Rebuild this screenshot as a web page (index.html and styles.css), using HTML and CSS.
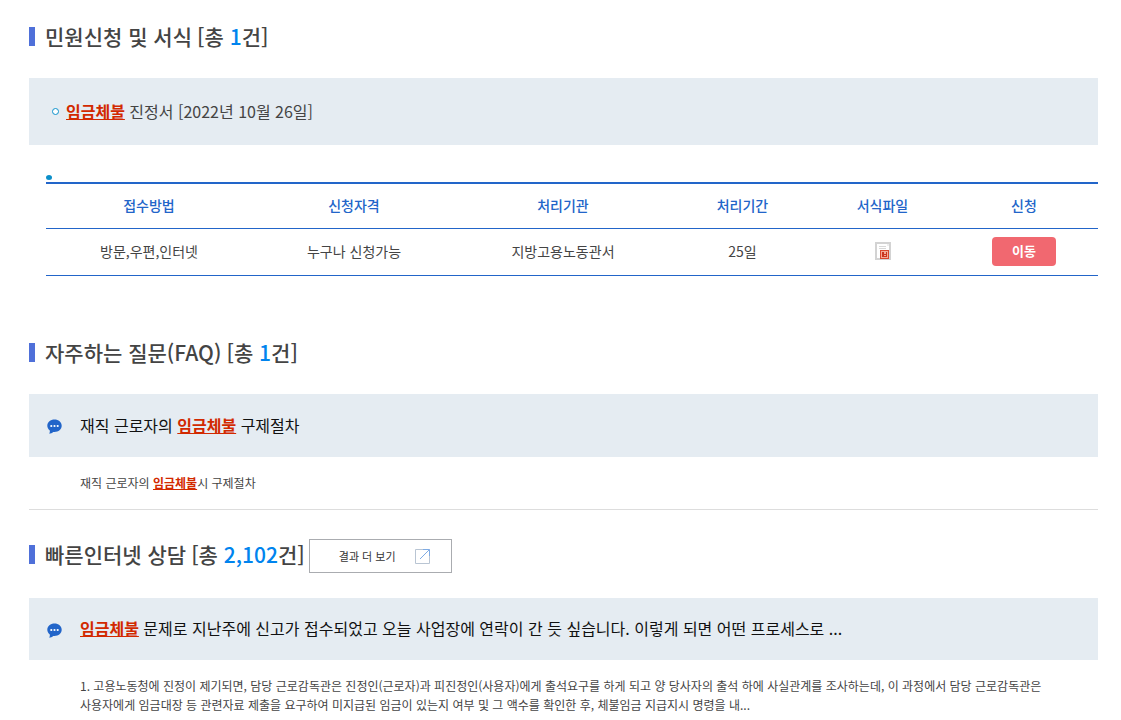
FILE: index.html
```html
<!DOCTYPE html>
<html lang="ko">
<head>
<meta charset="utf-8">
<meta name="viewport" content="width=device-width, initial-scale=1">
<title>통합검색</title>
<link rel="stylesheet" href="styles.css">
</head>
<body>
<main class="results">
  <section class="group forms">
    <header class="group-head">
      <h2 class="title">민원신청 및 서식 <span class="count">[총 <em>1</em>건]</span></h2>
    </header>
    <div class="bar bar-form">
      <span class="ring"></span>
      <a class="form-link" href="#"><mark>임금체불</mark> 진정서 [2022년 10월 26일]</a>
    </div>
    <div class="detail">
      <span class="dot"></span>
      <table class="info">
        <colgroup>
          <col class="c-method"><col class="c-who"><col class="c-office"><col class="c-period"><col class="c-file"><col class="c-apply">
        </colgroup>
        <thead>
          <tr><th scope="col">접수방법</th><th scope="col">신청자격</th><th scope="col">처리기관</th><th scope="col">처리기간</th><th scope="col">서식파일</th><th scope="col">신청</th></tr>
        </thead>
        <tbody>
          <tr>
            <td>방문,우편,인터넷</td>
            <td>누구나 신청가능</td>
            <td>지방고용노동관서</td>
            <td>25일</td>
            <td>
              <a class="file" href="#" aria-label="서식파일">
                <svg width="16" height="18" viewBox="0 0 16 18" shape-rendering="crispEdges">
                  <path fill="#d3d3d3" d="M0 0h16v18H0z"/>
                  <path fill="#fff" d="M2 2h12v14H2z"/>
                  <path fill="#d8d8d8" d="M4 4h7v1H4zM4 6h7v1H4z"/>
                  <path fill="#eee" d="M12 2h2v2h-2z"/>
                  <path fill="#d9472b" d="M5 8h9v9H5z"/>
                  <path fill="#f3ab97" d="M6 9h7v7H6z"/>
                  <path fill="#c9361f" d="M7 10h2v4H7zM11 10h1v4h-1zM9 12h2v1H9zM7 14h5v1H7z"/>
                </svg>
              </a>
            </td>
            <td><button class="go" type="button">이동</button></td>
          </tr>
        </tbody>
      </table>
    </div>
  </section>

  <section class="group faq">
    <header class="group-head">
      <h2 class="title">자주하는 질문(FAQ) <span class="count">[총 <em>1</em>건]</span></h2>
    </header>
    <div class="bar">
      <svg class="talk" width="15" height="15" viewBox="0 0 15 15"><path fill="#2265c9" d="M7.500.5C11.500.5 14.700 3.200 14.700 6.800S11.500 13 7.500 13L6.200 12.900C5.200 14 3.700 14.500 2 14.500C2.800 13.700 3 12.800 2.800 11.500C1.200 10.300.3 8.700.3 6.800C.3 3.200 3.500.5 7.500.5Z"/><g fill="#fff"><circle cx="4.300" cy="7" r="1.100"/><circle cx="7.500" cy="7" r="1.100"/><circle cx="10.700" cy="7" r="1.100"/></g></svg>
      <a class="question" href="#">재직 근로자의 <mark>임금체불</mark> 구제절차</a>
    </div>
    <p class="answer">재직 근로자의 <mark>임금체불</mark>시 구제절차</p>
  </section>

  <section class="group counsel">
    <header class="group-head">
      <h2 class="title">빠른인터넷 상담 <span class="count">[총 <em>2,102</em>건]</span></h2>
      <a class="more" href="#">결과 더 보기
        <svg width="15" height="15" viewBox="0 0 15 15" fill="none"><path stroke="#b9c5d3" d="M8 .5H.5v14h14V7"/><path stroke="#7eabe4" d="M5 10 14.300.7M8 .5h6.500V7"/></svg>
      </a>
    </header>
    <div class="bar">
      <svg class="talk" width="15" height="15" viewBox="0 0 15 15"><path fill="#2265c9" d="M7.500.5C11.500.5 14.700 3.200 14.700 6.800S11.500 13 7.500 13L6.200 12.900C5.200 14 3.700 14.500 2 14.500C2.800 13.700 3 12.800 2.800 11.500C1.200 10.300.3 8.700.3 6.800C.3 3.200 3.500.5 7.500.5Z"/><g fill="#fff"><circle cx="4.300" cy="7" r="1.100"/><circle cx="7.500" cy="7" r="1.100"/><circle cx="10.700" cy="7" r="1.100"/></g></svg>
      <a class="question" href="#"><mark>임금체불</mark> 문제로 지난주에 신고가 접수되었고 오늘 사업장에 연락이 간 듯 싶습니다. 이렇게 되면 어떤 프로세스로 ...</a>
    </div>
    <p class="answer">1. 고용노동청에 진정이 제기되면, 담당 근로감독관은 진정인(근로자)과 피진정인(사용자)에게 출석요구를 하게 되고 양 당사자의 출석 하에 사실관계를 조사하는데, 이 과정에서 담당 근로감독관은 사용자에게 임금대장 등 관련자료 제출을 요구하여 미지급된 임금이 있는지 여부 및 그 액수를 확인한 후, 체불임금 지급지시 명령을 내...</p>
  </section>
</main>
</body>
</html>
```
FILE: styles.css
```css
* { box-sizing: border-box; }

body {
  margin: 0;
  background: #fff;
  color: #444;
  font-family: "Noto Sans CJK KR", "Noto Sans", sans-serif;
  font-size: 14px;
  word-break: keep-all;
}

a { color: inherit; text-decoration: none; }

mark {
  background: none;
  color: #d22900;
  font-weight: 700;
  text-decoration: underline;
}

.results { padding: 20px 23px 0 29px; }

.group-head {
  display: flex;
  align-items: center;
  gap: 4px;
  height: 34px;
}

.title {
  display: flex;
  align-items: center;
  gap: 5px;
  margin: 0;
  padding-bottom: 2px;
  font-size: 21px;
  font-weight: 500;
  line-height: 32px;
}

.title::before {
  content: "";
  width: 6px;
  height: 19px;
  margin-right: 5px;
  background: #4f70d9;
}

.count em {
  color: #0084ee;
  font-style: normal;
}

.bar {
  display: flex;
  align-items: center;
  gap: 18px;
  min-height: 63px;
  padding: 0 18px;
  background: #e5ecf2;
  font-size: 16px;
  line-height: 24px;
}

.bar a { padding-bottom: 2px; }

.question { color: #111; }

.talk {
  flex: none;
  margin-top: 2px;
}

.forms .bar { margin-top: 24px; }

.bar-form {
  gap: 7px;
  min-height: 67px;
  padding: 0 23px;
}

.ring {
  width: 7px;
  height: 7px;
  border: 1px solid #0d91cc;
  border-radius: 50%;
  background: #fff;
}

.detail { padding: 30px 0 0 17px; }

.dot {
  display: block;
  width: 6px;
  height: 5px;
  margin-bottom: 2px;
  border-radius: 50%;
  background: #0b8fc9;
}

.info {
  width: 100%;
  border-top: 2px solid #2265c9;
  border-spacing: 0;
  table-layout: fixed;
  text-align: center;
}

.c-method { width: 206px; }
.c-who { width: 204px; }
.c-office { width: 214px; }
.c-period { width: 145px; }
.c-file { width: 135px; }
.c-apply { width: 148px; }

.info th,
.info td {
  height: 45px;
  padding: 0 0 2px;
  border-bottom: 1px solid #2265c9;
  line-height: 20px;
}

.info th {
  color: #2265c9;
  font-weight: 500;
}

.info td { height: 47px; }

.file svg {
  display: block;
  margin: 0 auto;
}

.go {
  width: 64px;
  height: 29px;
  padding: 0;
  border: 0;
  border-radius: 4px;
  background: #f16870;
  color: #fff;
  font: 700 13px/20px "Noto Sans CJK KR", "Noto Sans", sans-serif;
}

.faq {
  margin-top: 60px;
  border-bottom: 1px solid #ddd;
}

.faq .bar { margin-top: 24px; }

.answer {
  margin: 0;
  padding: 16px 50px 0 51px;
  font-size: 12px;
  line-height: 19px;
}

.faq .answer { padding-bottom: 17px; }

.counsel { margin-top: 29px; }
.counsel .title { padding-bottom: 4px; }
.counsel .bar { min-height: 62px; margin-top: 25px; }

.more {
  display: flex;
  align-items: center;
  gap: 19px;
  height: 34px;
  padding: 0 21px 0 29px;
  border: 1px solid #aaacb0;
  color: #333;
  font-size: 11px;
}
```
